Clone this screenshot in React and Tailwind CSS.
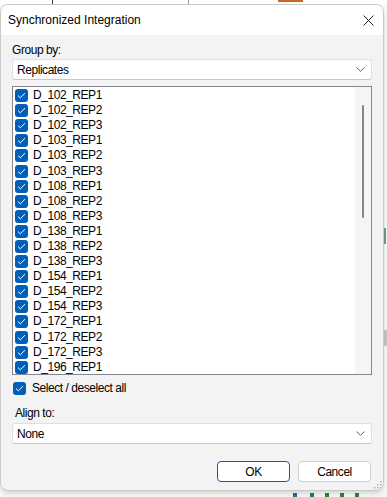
import React from 'react';

const items = [
  'D_102_REP1', 'D_102_REP2', 'D_102_REP3',
  'D_103_REP1', 'D_103_REP2', 'D_103_REP3',
  'D_108_REP1', 'D_108_REP2', 'D_108_REP3',
  'D_138_REP1', 'D_138_REP2', 'D_138_REP3',
  'D_154_REP1', 'D_154_REP2', 'D_154_REP3',
  'D_172_REP1', 'D_172_REP2', 'D_172_REP3',
  'D_196_REP1',
];

const font = { fontFamily: '"Segoe UI", "Liberation Sans", Arial, sans-serif' };

const CheckBox = () => (
  <span className="flex h-[13px] w-[13px] shrink-0 items-center justify-center rounded-[3px] bg-[#005fb8]">
    <svg width="9" height="7" viewBox="0 0 9 7" fill="none">
      <path d="M1 3.6 L3.3 5.8 L8 1.2" stroke="white" strokeWidth="1" />
    </svg>
  </span>
);

const Chevron = () => (
  <svg width="9" height="5" viewBox="0 0 9 5" fill="none">
    <path d="M0.5 0.5 L4.5 4.3 L8.5 0.5" stroke="#5d5d5d" strokeWidth="1" />
  </svg>
);

const ComboBox = ({ value }) => (
  <div className="flex h-[21px] items-center justify-between rounded-[3px] border border-[#e0e0e0] border-b-[#c8c8c8] bg-white pl-[4px] pr-[6px]">
    <span>{value}</span>
    <Chevron />
  </div>
);

// Synchronized Integration dialog
export default function App() {
  return (
    <div className="relative h-[497px] w-[387px] overflow-hidden bg-[#f7f7f7] text-[12px] text-black" style={font}>
      {/* bits of the window behind */}
      <div className="absolute left-0 top-0 h-[4px] w-[387px] bg-white" />
      <div className="absolute left-[52px] top-0 h-[4px] w-px bg-[#333]" />
      <div className="absolute left-[188px] top-0 h-[4px] w-px bg-[#999]" />
      <div className="absolute left-[278px] top-0 h-[2px] w-[25px] bg-[#c8642a]" />
      <div className="absolute left-[384px] top-[228px] h-[16px] w-[2px] bg-[#6a9a8a]" />
      <div className="absolute left-[384px] top-[330px] h-[16px] w-[3px] bg-[#c4c4c4]" />
      <div className="absolute left-[293px] top-[493px] h-[4px] w-[4px] bg-[#1a7a7a]" />
      <div className="absolute left-[310px] top-[493px] h-[4px] w-[4px] bg-[#1a7a7a]" />
      <div className="absolute left-[325px] top-[493px] h-[4px] w-[4px] bg-[#2a8a2a]" />
      <div className="absolute left-[340px] top-[493px] h-[4px] w-[4px] bg-[#2a8a2a]" />
      <div className="absolute left-[355px] top-[493px] h-[4px] w-[4px] bg-[#2a8a2a]" />

      <div className="relative mt-[4px] flex h-[487px] w-[384px] flex-col overflow-hidden rounded-[8px] border border-[#c9c9c9] bg-[#f3f3f3] shadow-md">
        {/* Title bar */}
        <div className="flex h-[30px] shrink-0 items-center justify-between bg-white pl-[7px] pr-[9px]">
          <span className="text-[12px]">Synchronized Integration</span>
          <svg width="11" height="11" viewBox="0 0 11 11" fill="none">
            <path d="M0.5 0.5 L10.5 10.5 M10.5 0.5 L0.5 10.5" stroke="#222" strokeWidth="1" />
          </svg>
        </div>

        <div className="flex flex-1 flex-col px-[11px] tracking-[-0.45px]">
          <div className="mt-[7px] h-[16px] leading-[16px]">Group by:</div>
          <div className="mt-[1px]">
            <ComboBox value="Replicates" />
          </div>

          {/* List */}
          <div className="mt-[6px] flex h-[289px] border border-[#828790] bg-white">
            <div className="flex-1 pt-[1px]">
              {items.map((name) => (
                <div key={name} className="flex h-[15.1px] items-center gap-[5px] pl-[2px]">
                  <CheckBox />
                  <span className="leading-[15px]">{name}</span>
                </div>
              ))}
            </div>
            <div className="flex w-[16px] justify-center bg-[#f5f5f5] pt-[18px]">
              <div className="h-[113px] w-[2px] rounded-full bg-[#858585]" />
            </div>
          </div>

          <div className="mt-[6px] flex h-[14px] items-center gap-[6px] pl-[1px]">
            <CheckBox />
            <span>Select / deselect all</span>
          </div>

          <div className="mt-[10px] h-[16px] pl-[3px] leading-[16px]">Align to:</div>
          <div className="mt-[2px]">
            <ComboBox value="None" />
          </div>

          <div className="mt-[17px] flex justify-end gap-[8px] pr-[1px]">
            <button className="h-[21px] w-[73px] rounded-[4px] border border-[#005fb8] bg-white text-[12px]">OK</button>
            <button className="h-[21px] w-[73px] rounded-[4px] border border-[#d0d0d0] bg-white text-[12px]">Cancel</button>
          </div>
        </div>

        {/* resize grip */}
        <svg className="absolute bottom-[1px] right-[1px]" width="9" height="9" viewBox="0 0 9 9">
          <rect x="7" y="1" width="1.5" height="1.5" fill="#b5b5b5" />
          <rect x="4" y="4" width="1.5" height="1.5" fill="#b5b5b5" />
          <rect x="7" y="4" width="1.5" height="1.5" fill="#b5b5b5" />
          <rect x="1" y="7" width="1.5" height="1.5" fill="#b5b5b5" />
          <rect x="4" y="7" width="1.5" height="1.5" fill="#b5b5b5" />
          <rect x="7" y="7" width="1.5" height="1.5" fill="#b5b5b5" />
        </svg>
      </div>
    </div>
  );
}
